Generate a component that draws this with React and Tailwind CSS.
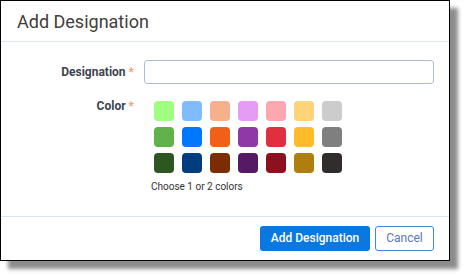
import React from "react";

const SWATCHES = [
  ["#a0ff80", "#80bbff", "#f5b08c", "#e59cf5", "#fca8b0", "#ffd479", "#cccccc"],
  ["#62b24c", "#0077ff", "#f06017", "#9038a8", "#e03040", "#ffbb2a", "#807f7f"],
  ["#2d5720", "#003c80", "#7b2c00", "#541a63", "#8c101e", "#b07d0f", "#312d2d"],
];

export default function App() {
  return (
    <div className="w-[465px] h-[276px] bg-white font-['Roboto',sans-serif]">
      <div className="w-[450px] h-[261px] border border-black bg-white shadow-[8px_8px_4px_rgba(0,0,0,0.45)] flex flex-col">
        {/* Header */}
        <div className="h-[41px] border-b border-[#dde6ef] px-4 flex items-center">
          <h1 className="text-[18px] text-[#404040] leading-none pt-[1px]">Add Designation</h1>
        </div>

        {/* Body */}
        <div className="flex-1 pt-[18px]">
          <div className="flex items-center">
            <label className="w-[133px] text-right text-[12px] font-bold text-[#3d4450]">
              Designation <span className="text-[#f5a071]">*</span>
            </label>
            <input className="ml-[10px] w-[290px] h-[24px] border border-[#aabfd6] rounded-[3px] px-2 text-[12px] outline-none" />
          </div>

          <div className="flex mt-[16px]">
            <label className="w-[133px] text-right text-[12px] leading-[12px] font-bold text-[#3d4450]">
              Color <span className="text-[#f5a071]">*</span>
            </label>
            <div className="ml-[18px] mt-[1px]">
              <div className="flex flex-col gap-[6px] ml-[2px]">
                {SWATCHES.map((row, i) => (
                  <div key={i} className="flex gap-[8px]">
                    {row.map((c) => (
                      <div key={c} className="w-[20px] h-[20px] rounded-[4px]" style={{ backgroundColor: c }} />
                    ))}
                  </div>
                ))}
              </div>
              <p className="mt-[6px] -ml-[1px] text-[10px] text-[#333]">Choose 1 or 2 colors</p>
            </div>
          </div>
        </div>

        {/* Footer */}
        <div className="h-[44px] border-t border-[#dde6ef] flex items-center justify-end gap-[5px] pr-[15px] pb-[1px]">
          <button className="w-[110px] h-[25px] rounded-[3px] bg-[#0a78e0] text-white text-[12px] font-medium">
            Add Designation
          </button>
          <button className="w-[59px] h-[25px] rounded-[3px] border border-[#3b8be0] text-[#5a76c0] text-[12px]">
            Cancel
          </button>
        </div>
      </div>
    </div>
  );
}
